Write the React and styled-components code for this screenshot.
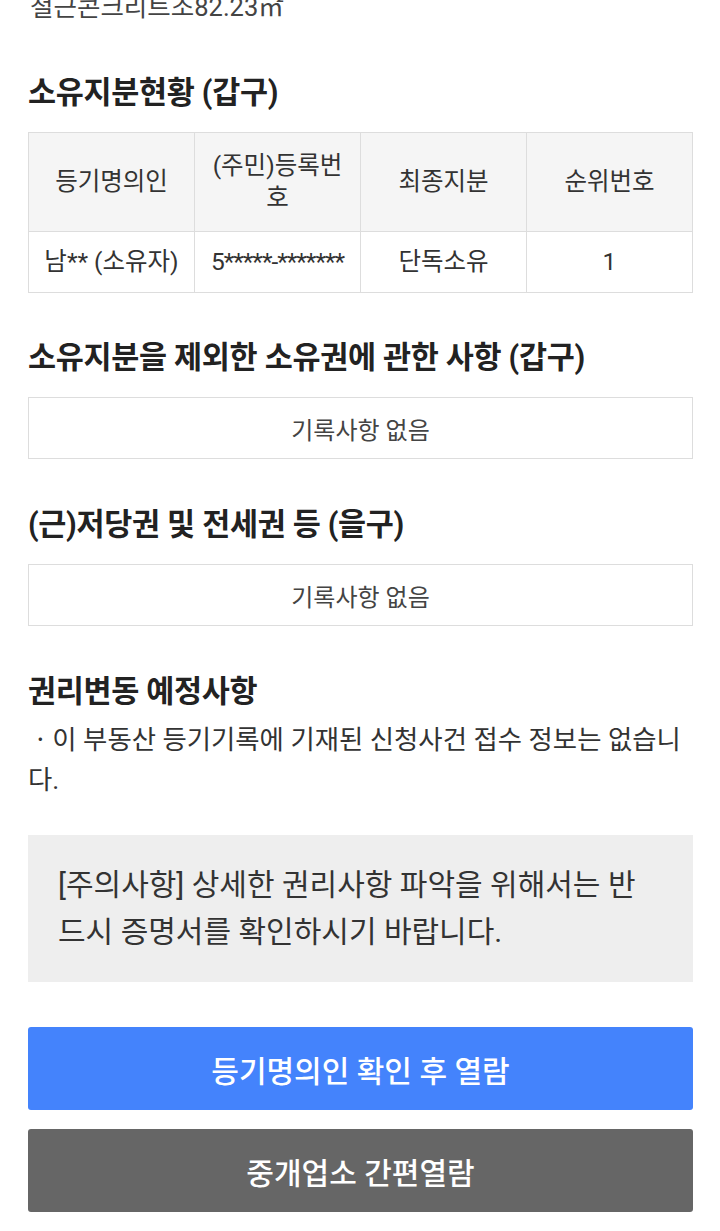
import React from 'react';
import styled, { createGlobalStyle } from 'styled-components';

const GlobalStyle = createGlobalStyle`
  html, body {
    margin: 0;
    padding: 0;
    background: #ffffff;
  }
  body {
    font-family: Roboto, "Noto Sans CJK KR", "Noto Sans", sans-serif;
    color: #222;
    -webkit-font-smoothing: antialiased;
  }
`;

const Page = styled.main`
  display: flex;
  flex-direction: column;
  padding: 0 27px 19px 28px;
  margin-top: -13px;
`;

const Structure = styled.p`
  margin: 0;
  font-size: 25.5px;
  line-height: 40px;
  color: #444;
  padding-left: 2px;
`;

const Section = styled.section`
  display: flex;
  flex-direction: column;
  gap: ${(p) => p.$gap || 19}px;
  margin-top: ${(p) => p.$top || 46}px;
`;

const Heading = styled.h2`
  margin: 0;
  font-size: 30.5px;
  line-height: 40px;
  font-weight: 700;
  color: #222;
  letter-spacing: -0.3px;
`;

const Table = styled.table`
  width: 100%;
  border-collapse: collapse;
  table-layout: fixed;
  font-size: 24.5px;
  color: #333;
`;

const HeadCell = styled.th`
  background: #f5f5f5;
  border: 1px solid #dddddd;
  font-weight: 400;
  line-height: 32px;
  padding: 17px 10px;
  text-align: center;
  vertical-align: middle;
`;

const Cell = styled.td`
  border: 1px solid #dddddd;
  line-height: 32px;
  padding: 14px 4px;
  text-align: center;
  white-space: nowrap;
  letter-spacing: ${(p) => (p.$tight ? '-1px' : 'normal')};
`;

const EmptyBox = styled.div`
  display: flex;
  align-items: center;
  justify-content: center;
  height: 60px;
  border: 1px solid #dddddd;
  font-size: 24px;
  color: #444;
`;

const Note = styled.p`
  margin: 0;
  font-size: 26.4px;
  line-height: 40px;
  color: #333;
  padding-right: 8px;
`;

const Notice = styled.div`
  margin-top: 35px;
  background: #eeeeee;
  padding: 26px 32px 27px 30px;
  font-size: 30px;
  line-height: 47px;
  color: #333;
`;

const Actions = styled.div`
  display: flex;
  flex-direction: column;
  gap: 19px;
  margin-top: 45px;
`;

const ActionButton = styled.button`
  height: 83px;
  border: 0;
  border-radius: 3px;
  background: ${(p) => (p.$variant === 'gray' ? '#666666' : '#4483fc')};
  color: #ffffff;
  font-family: inherit;
  font-size: 30px;
  font-weight: 500;
  cursor: pointer;
`;

const owners = [
  { name: '남** (소유자)', id: '5*****-*******', share: '단독소유', rank: '1' },
];

export default function App() {
  return (
    <>
      <GlobalStyle />
      <Page>
        <Structure>철근콘크리트조82.23㎡</Structure>

        <Section $top={46}>
          <Heading>소유지분현황 (갑구)</Heading>
          <Table>
            <thead>
              <tr>
                <HeadCell>등기명의인</HeadCell>
                <HeadCell>(주민)등록번호</HeadCell>
                <HeadCell>최종지분</HeadCell>
                <HeadCell>순위번호</HeadCell>
              </tr>
            </thead>
            <tbody>
              {owners.map((o) => (
                <tr key={o.id}>
                  <Cell>{o.name}</Cell>
                  <Cell $tight>{o.id}</Cell>
                  <Cell>{o.share}</Cell>
                  <Cell>{o.rank}</Cell>
                </tr>
              ))}
            </tbody>
          </Table>
        </Section>

        <Section $top={45}>
          <Heading>소유지분을 제외한 소유권에 관한 사항 (갑구)</Heading>
          <EmptyBox>기록사항 없음</EmptyBox>
        </Section>

        <Section>
          <Heading>(근)저당권 및 전세권 등 (을구)</Heading>
          <EmptyBox>기록사항 없음</EmptyBox>
        </Section>

        <Section $gap={8}>
          <Heading>권리변동 예정사항</Heading>
          <Note>ㆍ이 부동산 등기기록에 기재된 신청사건 접수 정보는 없습니다.</Note>
        </Section>

        <Notice>[주의사항] 상세한 권리사항 파악을 위해서는 반드시 증명서를 확인하시기 바랍니다.</Notice>

        <Actions>
          <ActionButton>등기명의인 확인 후 열람</ActionButton>
          <ActionButton $variant="gray">중개업소 간편열람</ActionButton>
        </Actions>
      </Page>
    </>
  );
}
